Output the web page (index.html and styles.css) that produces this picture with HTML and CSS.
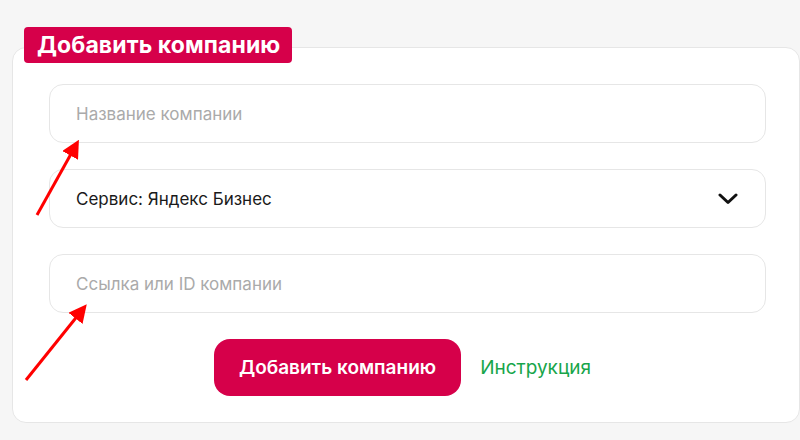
FILE: index.html
```html
<!DOCTYPE html>
<html lang="ru">
<head>
    <meta charset="UTF-8">
    <meta name="viewport" content="width=device-width, initial-scale=1.0">
    <title>Добавить компанию</title>
    <link rel="stylesheet" href="styles.css">
</head>
<body>
    <div class="page">
        <div class="card">
            <div class="card-title">Добавить компанию</div>

            <div class="field">
                <input type="text" class="input-field" placeholder="Название компании">
            </div>

            <div class="field select-field">
                <span class="select-value">Сервис: Яндекс Бизнес</span>
                <svg class="chevron" width="20" height="12" viewBox="0 0 20 12">
                    <path d="M2 2 L10 9.5 L18 2" fill="none" stroke="#111" stroke-width="3" stroke-linecap="round" stroke-linejoin="round"/>
                </svg>
            </div>

            <div class="field">
                <input type="text" class="input-field" placeholder="Ссылка или ID компании">
            </div>

            <div class="actions">
                <button class="add-btn">Добавить компанию</button>
                <a href="#" class="help-link">Инструкция</a>
            </div>
        </div>

        <!-- red annotation arrows -->
        <svg class="arrows" width="800" height="440" viewBox="0 0 800 440">
            <defs>
                <marker id="head" markerWidth="6" markerHeight="6" refX="4" refY="3" orient="auto" markerUnits="strokeWidth">
                    <path d="M0 0 L6 3 L0 6 Z" fill="#ff0000"/>
                </marker>
            </defs>
            <line x1="37" y1="215" x2="76" y2="145" stroke="#ff0000" stroke-width="3" marker-end="url(#head)"/>
            <line x1="26" y1="380" x2="83" y2="309" stroke="#ff0000" stroke-width="3" marker-end="url(#head)"/>
        </svg>
    </div>
</body>
</html>
```

FILE: styles.css
```css
* {
    margin: 0;
    padding: 0;
    box-sizing: border-box;
}

body {
    font-family: Inter, 'Noto Sans', sans-serif;
    background: #f6f6f6;
    width: 800px;
    height: 440px;
    overflow: hidden;
}

.page {
    position: relative;
    padding: 47px 0 0 12px;
    height: 440px;
}

.card {
    position: relative;
    width: 788px;
    height: 376px;
    background: #fff;
    border: 1px solid #e6e6e6;
    border-radius: 14px;
    padding: 36px 33px 0 36px;
    display: flex;
    flex-direction: column;
    gap: 26px;
}

.card-title {
    position: absolute;
    top: -21px;
    left: 11px;
    height: 36px;
    padding: 0 12px 0 13px;
    background: #d6004a;
    color: #fff;
    border-radius: 4px;
    font-size: 23px;
    font-weight: 700;
    line-height: 36px;
    letter-spacing: 0.1px;
}

.field {
    height: 59px;
    border: 1px solid #e6e6e6;
    border-radius: 14px;
    display: flex;
    align-items: center;
    padding: 0 26px;
}

.input-field {
    width: 100%;
    border: none;
    outline: none;
    background: transparent;
    font-family: inherit;
    font-size: 17px;
    color: #222;
}

.input-field::placeholder {
    color: #aaa;
}

.select-field {
    justify-content: space-between;
    padding-right: 27px;
}

.select-value {
    font-size: 17px;
    color: #1a1a1a;
}

.actions {
    display: flex;
    align-items: center;
    justify-content: center;
    gap: 19px;
    padding-right: 10px;
}

.add-btn {
    height: 57px;
    padding: 0 25px;
    border: none;
    border-radius: 16px;
    background: #d6004a;
    color: #fff;
    font-family: inherit;
    font-size: 19px;
    font-weight: 600;
    cursor: pointer;
}

.help-link {
    color: #17a54a;
    font-size: 19px;
    text-decoration: none;
}

.arrows {
    position: absolute;
    top: 0;
    left: 0;
    pointer-events: none;
}
```
